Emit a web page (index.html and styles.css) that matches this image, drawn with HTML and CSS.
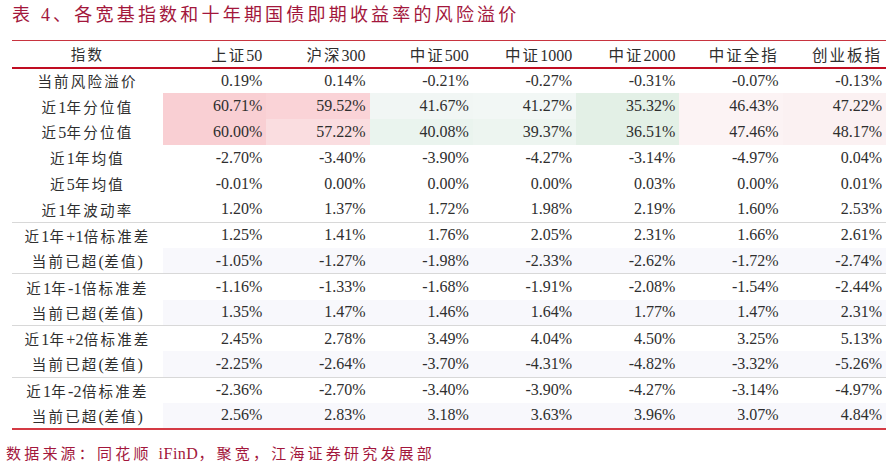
FILE: index.html
```html
<!DOCTYPE html>
<html lang="zh-CN">
<head>
<meta charset="utf-8">
<title>风险溢价</title>
<link rel="stylesheet" href="styles.css">
</head>
<body>
<div class="page">
  <h1 class="title">表 4、各宽基指数和十年期国债即期收益率的风险溢价</h1>
  <table class="data">
    <thead>
      <tr>
        <th class="label">指数</th>
        <th>上证<span class="n">50</span></th>
        <th>沪深<span class="n">300</span></th>
        <th>中证<span class="n">500</span></th>
        <th>中证<span class="n">1000</span></th>
        <th>中证<span class="n">2000</span></th>
        <th>中证全指</th>
        <th>创业板指</th>
      </tr>
    </thead>
    <tbody>
      <tr>
        <td class="label">当前风险溢价</td>
        <td>0.19%</td><td>0.14%</td><td>-0.21%</td><td>-0.27%</td><td>-0.31%</td><td>-0.07%</td><td>-0.13%</td>
      </tr>
      <tr>
        <td class="label">近<span class="n">1</span>年分位值</td>
        <td class="p1">60.71%</td><td class="p2">59.52%</td><td class="g1">41.67%</td><td class="g2">41.27%</td><td class="g3">35.32%</td><td class="r1">46.43%</td><td class="r2">47.22%</td>
      </tr>
      <tr>
        <td class="label">近<span class="n">5</span>年分位值</td>
        <td class="p1">60.00%</td><td class="p3">57.22%</td><td class="g1b">40.08%</td><td class="g2b">39.37%</td><td class="g3">36.51%</td><td class="r1">47.46%</td><td class="r2">48.17%</td>
      </tr>
      <tr>
        <td class="label">近<span class="n">1</span>年均值</td>
        <td>-2.70%</td><td>-3.40%</td><td>-3.90%</td><td>-4.27%</td><td>-3.14%</td><td>-4.97%</td><td>0.04%</td>
      </tr>
      <tr>
        <td class="label">近<span class="n">5</span>年均值</td>
        <td>-0.01%</td><td>0.00%</td><td>0.00%</td><td>0.00%</td><td>0.03%</td><td>0.00%</td><td>0.01%</td>
      </tr>
      <tr class="sep">
        <td class="label">近<span class="n">1</span>年波动率</td>
        <td>1.20%</td><td>1.37%</td><td>1.72%</td><td>1.98%</td><td>2.19%</td><td>1.60%</td><td>2.53%</td>
      </tr>
      <tr>
        <td class="label">近<span class="n">1</span>年<span class="n">+1</span>倍标准差</td>
        <td>1.25%</td><td>1.41%</td><td>1.76%</td><td>2.05%</td><td>2.31%</td><td>1.66%</td><td>2.61%</td>
      </tr>
      <tr class="sep shade">
        <td class="label">当前已超<span class="n">(</span>差值<span class="n">)</span></td>
        <td>-1.05%</td><td>-1.27%</td><td>-1.98%</td><td>-2.33%</td><td>-2.62%</td><td>-1.72%</td><td>-2.74%</td>
      </tr>
      <tr>
        <td class="label">近<span class="n">1</span>年<span class="n">-1</span>倍标准差</td>
        <td>-1.16%</td><td>-1.33%</td><td>-1.68%</td><td>-1.91%</td><td>-2.08%</td><td>-1.54%</td><td>-2.44%</td>
      </tr>
      <tr class="sep shade">
        <td class="label">当前已超<span class="n">(</span>差值<span class="n">)</span></td>
        <td>1.35%</td><td>1.47%</td><td>1.46%</td><td>1.64%</td><td>1.77%</td><td>1.47%</td><td>2.31%</td>
      </tr>
      <tr>
        <td class="label">近<span class="n">1</span>年<span class="n">+2</span>倍标准差</td>
        <td>2.45%</td><td>2.78%</td><td>3.49%</td><td>4.04%</td><td>4.50%</td><td>3.25%</td><td>5.13%</td>
      </tr>
      <tr class="sep shade">
        <td class="label">当前已超<span class="n">(</span>差值<span class="n">)</span></td>
        <td>-2.25%</td><td>-2.64%</td><td>-3.70%</td><td>-4.31%</td><td>-4.82%</td><td>-3.32%</td><td>-5.26%</td>
      </tr>
      <tr>
        <td class="label">近<span class="n">1</span>年<span class="n">-2</span>倍标准差</td>
        <td>-2.36%</td><td>-2.70%</td><td>-3.40%</td><td>-3.90%</td><td>-4.27%</td><td>-3.14%</td><td>-4.97%</td>
      </tr>
      <tr class="shade last">
        <td class="label">当前已超<span class="n">(</span>差值<span class="n">)</span></td>
        <td>2.56%</td><td>2.83%</td><td>3.18%</td><td>3.63%</td><td>3.96%</td><td>3.07%</td><td>4.84%</td>
      </tr>
    </tbody>
  </table>
  <p class="source">数据来源：同花顺 <span class="n">iFinD</span>，聚宽，江海证券研究发展部</p>
</div>
</body>
</html>
```

FILE: styles.css
```css
* { box-sizing: border-box; }
html, body { margin: 0; padding: 0; background: #ffffff; }
.page {
  width: 892px;
  height: 466px;
  padding: 0 6px 0 12px;
  font-family: "Liberation Serif", "Noto Sans CJK SC", serif;
  color: #2b2b2b;
}
.title {
  margin: 0;
  padding-top: 4px;
  height: 40px;
  font-family: "Liberation Serif", "Noto Sans CJK SC", serif;
  font-weight: 400;
  font-size: 18px;
  line-height: 22px;
  letter-spacing: 3.2px;
  color: #a3173c;
}
.data {
  width: 874px;
  border-collapse: collapse;
  table-layout: fixed;
  border-top: 1.5px solid #c8343f;
}
.data th, .data td {
  padding: 0 4px 0 0;
  text-align: right;
  font-size: 16px;
  font-weight: 400;
  white-space: nowrap;
  color: #2e2e2e;
}
.data th {
  height: 27px;
  letter-spacing: 2px;
  font-size: 15.5px;
  border-bottom: 2.5px solid #c00d22;
}
.data th .n { letter-spacing: 0; font-size: 16px; }
.data th.label, .data td.label {
  width: 151px;
  text-align: center;
  padding: 0;
  letter-spacing: 2.2px;
  font-size: 14.5px;
}
.data td.label .n { letter-spacing: 0.3px; font-size: 16px; }
.data td { height: 25.8px; }
.data tbody tr.sep td { border-bottom: 1.5px solid #d8d8d8; }
.data tbody tr.last td { border-bottom: 2.5px solid #d43a44; }
.data tbody tr.shade td:not(.label) { background: #f8f8fc; }
.data td.p1 { background: #f9cfd3; }
.data td.p2 { background: #fad3d7; }
.data td.p3 { background: #fadde0; }
.data td.g1 { background: #f1f6f4; }
.data td.g2 { background: #f2f7f5; }
.data td.g1b { background: #eaf4ee; }
.data td.g2b { background: #edf5f0; }
.data td.g3 { background: #e3f0e6; }
.data td.r1 { background: #fcf3f4; }
.data td.r2 { background: #fbf1f2; }
.source {
  margin: 14px 0 0 -6px;
  font-size: 15px;
  line-height: 20px;
  letter-spacing: 3.2px;
  color: #a3173c;
}
.source .n { letter-spacing: 0.5px; font-size: 16px; }
```
